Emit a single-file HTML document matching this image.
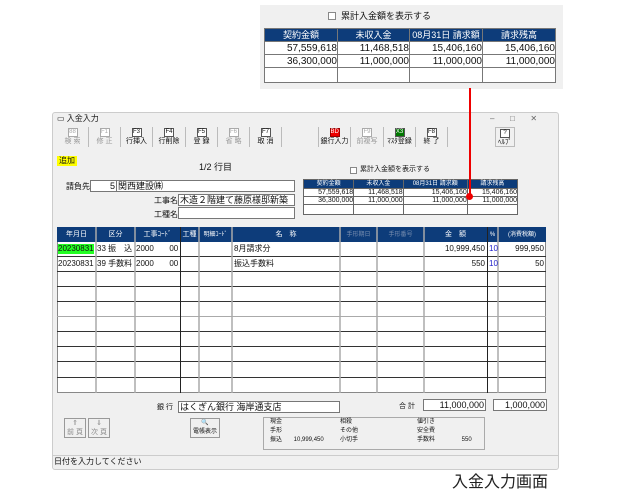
<!DOCTYPE html>
<html><head><meta charset="utf-8"><style>
*{margin:0;padding:0;box-sizing:border-box}
body{width:617px;height:500px;background:#fff;position:relative;overflow:hidden;font-family:"Liberation Sans","Noto Sans CJK JP",sans-serif;color:#111}
.a{position:absolute}
.t{position:absolute;font-size:8px;white-space:nowrap;line-height:10px}
.hd{background:#0d3c7a;color:#fff;font-size:8px;text-align:center;line-height:12px}
.box{position:absolute;background:#fff;border:1px solid #777}
.tb{position:absolute;top:127px;height:20px;border-right:1px solid #bbb;text-align:center;font-size:7px;line-height:8px}
.tb i{display:block;margin:1px auto 1px;width:10px;height:9px;border:1px solid #555;font-style:normal;font-size:6px;line-height:7px;background:#fff}
.g{color:#999}.g i{border-color:#aaa;color:#aaa}
</style></head><body>

<!-- popup -->
<div class="a" style="left:260px;top:5px;width:303px;height:84px;background:#f0f0f0"></div>
<div class="a" style="left:328px;top:12px;width:8px;height:8px;border:1px solid #888;background:#fff"></div>
<div class="t" style="left:341px;top:11px;font-size:9px">累計入金額を表示する</div>
<table class="a" style="left:264px;top:28px;width:292px;border-collapse:collapse;font-size:10px">
<tr class="hd" style="font-size:9px"><td style="width:73px;border:1px solid #777">契約金額</td><td style="width:72px;border:1px solid #777">未収入金</td><td style="width:73px;border:1px solid #777">08月31日 請求額</td><td style="border:1px solid #777">請求残高</td></tr>
<tr style="height:13px;text-align:right;background:#fff"><td style="border:1px solid #777">57,559,618</td><td style="border:1px solid #777">11,468,518</td><td style="border:1px solid #777">15,406,160</td><td style="border:1px solid #777">15,406,160</td></tr>
<tr style="height:13px;text-align:right;background:#fff"><td style="border:1px solid #777">36,300,000</td><td style="border:1px solid #777">11,000,000</td><td style="border:1px solid #777">11,000,000</td><td style="border:1px solid #777">11,000,000</td></tr>
<tr style="height:15px;background:#fff"><td style="border:1px solid #777"></td><td style="border:1px solid #777"></td><td style="border:1px solid #777"></td><td style="border:1px solid #777"></td></tr>
</table>

<!-- window -->
<div class="a" style="left:52px;top:112px;width:507px;height:358px;background:#f0f0f0;border:1px solid #ccc;border-radius:3px"></div>
<div class="t" style="left:57px;top:114px">▭ 入金入力</div>
<div class="t" style="left:490px;top:114px;color:#666">–&nbsp;&nbsp;&nbsp;&nbsp;&nbsp;&nbsp;&nbsp;□&nbsp;&nbsp;&nbsp;&nbsp;&nbsp;&nbsp;&nbsp;✕</div>
<div class="tb g" style="left:57px;width:32px"><i>88</i>検 索</div>
<div class="tb g" style="left:89px;width:32px"><i>F1</i>修 正</div>
<div class="tb" style="left:121px;width:32px"><i>F3</i>行挿入</div>
<div class="tb" style="left:153px;width:33px"><i>F4</i>行削除</div>
<div class="tb" style="left:186px;width:32px"><i>F5</i>登 録</div>
<div class="tb g" style="left:218px;width:32px"><i>F6</i>省 略</div>
<div class="tb" style="left:250px;width:32px"><i>F7</i>取 消</div>
<div class="tb" style="left:282px;width:37px"></div>
<div class="tb" style="left:319px;width:32px"><i style="background:#e00;color:#fff;border-color:#900">BD</i>銀行入力</div>
<div class="tb g" style="left:351px;width:33px"><i>F9</i>前複写</div>
<div class="tb" style="left:384px;width:32px"><i style="background:#070;color:#fff">X3</i>ﾏｽﾀ登録</div>
<div class="tb" style="left:416px;width:32px"><i>F8</i>終 了</div>
<div class="tb" style="left:495px;width:20px;border:1px solid #bbb"><i>?</i>ﾍﾙﾌﾟ</div>

<div class="t" style="left:57px;top:156px;background:#ff0;padding:0 2px">追加</div>
<div class="t" style="left:199px;top:162px;font-size:9px">1/2 行目</div>
<div class="a" style="left:350px;top:167px;width:7px;height:7px;border:1px solid #888;background:#fff"></div>
<div class="t" style="left:360px;top:165px;font-size:7px">累計入金額を表示する</div>
<div class="t" style="left:66px;top:182px">請負先</div>
<div class="box" style="left:90px;top:180px;width:205px;height:12px"></div>
<div class="a" style="left:116px;top:181px;width:1px;height:10px;background:#777"></div>
<div class="t" style="left:90px;top:181px;width:25px;text-align:right;font-size:9px">5</div>
<div class="t" style="left:118px;top:181px;font-size:9px">関西建設㈱</div>
<div class="t" style="left:154px;top:196px">工事名</div>
<div class="box" style="left:178px;top:194px;width:117px;height:12px"></div>
<div class="t" style="left:180px;top:195px;font-size:9px">木造２階建て藤原様邸新築</div>
<div class="t" style="left:154px;top:210px">工種名</div>
<div class="box" style="left:178px;top:207px;width:117px;height:12px"></div>

<table class="a" style="left:303px;top:179px;width:215px;border-collapse:collapse;font-size:7px;background:#fff">
<tr class="hd" style="font-size:6px;line-height:8px"><td style="border:1px solid #666">契約金額</td><td style="border:1px solid #666">未収入金</td><td style="border:1px solid #666">08月31日 請求額</td><td style="border:1px solid #666">請求残高</td></tr>
<tr style="height:8px;text-align:right"><td style="border:1px solid #666">57,559,618</td><td style="border:1px solid #666">11,468,518</td><td style="border:1px solid #666">15,406,160</td><td style="border:1px solid #666">15,406,160</td></tr>
<tr style="height:8px;text-align:right"><td style="border:1px solid #666">36,300,000</td><td style="border:1px solid #666">11,000,000</td><td style="border:1px solid #666">11,000,000</td><td style="border:1px solid #666">11,000,000</td></tr>
<tr style="height:10px"><td style="border:1px solid #666"></td><td style="border:1px solid #666"></td><td style="border:1px solid #666"></td><td style="border:1px solid #666"></td></tr>
</table>

<!-- red pointer -->
<div class="a" style="left:469px;top:88px;width:2px;height:108px;background:#e00"></div>
<div class="a" style="left:466px;top:193px;width:7px;height:7px;border-radius:50%;background:#e00"></div>

<!-- grid -->
<div class="a" style="left:57px;top:227px;width:489px;height:166px;background:#fff;border:1px solid #888"></div>
<div class="a hd" style="left:57px;top:227px;width:489px;height:15px"></div>
<svg class="a" style="left:0;top:0" width="617" height="500">
<g stroke="#333" stroke-width="1">
<line x1="57" y1="256.5" x2="546" y2="256.5"/><line x1="57" y1="271.5" x2="546" y2="271.5"/><line x1="57" y1="286.5" x2="546" y2="286.5"/><line x1="57" y1="301.5" x2="546" y2="301.5"/><line x1="57" y1="316.5" x2="546" y2="316.5" stroke="#aaa"/><line x1="57" y1="331.5" x2="546" y2="331.5"/><line x1="57" y1="346.5" x2="546" y2="346.5"/><line x1="57" y1="361.5" x2="546" y2="361.5"/><line x1="57" y1="377.5" x2="546" y2="377.5"/>
</g>
<g stroke="#aaa" stroke-width="1.5">
<line x1="96" y1="227" x2="96" y2="393"/><line x1="135" y1="227" x2="135" y2="393"/><line x1="199" y1="227" x2="199" y2="393"/><line x1="232" y1="227" x2="232" y2="393"/><line x1="340" y1="227" x2="340" y2="393"/><line x1="377" y1="227" x2="377" y2="393"/><line x1="424" y1="227" x2="424" y2="393"/><line x1="498" y1="227" x2="498" y2="393"/>
</g>
<g stroke="#222" stroke-width="1"><line x1="180.5" y1="227" x2="180.5" y2="393"/><line x1="487.5" y1="227" x2="487.5" y2="393"/></g>
</svg>
<div class="t" style="left:57px;top:230px;width:39px;text-align:center;color:#fff;font-size:7px">年月日</div>
<div class="t" style="left:96px;top:230px;width:39px;text-align:center;color:#fff;font-size:7px">区分</div>
<div class="t" style="left:135px;top:230px;width:45px;text-align:center;color:#fff;font-size:7px">工事ｺｰﾄﾞ</div>
<div class="t" style="left:180px;top:230px;width:19px;text-align:center;color:#fff;font-size:7px">工種</div>
<div class="t" style="left:199px;top:230px;width:33px;text-align:center;color:#fff;font-size:6px">明細ｺｰﾄﾞ</div>
<div class="t" style="left:232px;top:230px;width:108px;text-align:center;color:#fff;font-size:7px">名　称</div>
<div class="t" style="left:340px;top:230px;width:37px;text-align:center;color:#7a8fb0;font-size:6px">手形期日</div>
<div class="t" style="left:377px;top:230px;width:47px;text-align:center;color:#7a8fb0;font-size:6px">手形番号</div>
<div class="t" style="left:424px;top:230px;width:63px;text-align:center;color:#fff;font-size:7px">金　額</div>
<div class="t" style="left:487px;top:230px;width:11px;text-align:center;color:#fff;font-size:6px">%</div>
<div class="t" style="left:498px;top:230px;width:48px;text-align:center;color:#fff;font-size:6px">(消費税額)</div>

<div class="t" style="left:58px;top:244px;background:#2f2;font-size:8px">20230831</div>
<div class="t" style="left:97px;top:244px">33 振　込</div>
<div class="t" style="left:136px;top:244px">2000&nbsp;&nbsp;&nbsp;&nbsp;&nbsp;&nbsp;&nbsp;00</div>
<div class="t" style="left:234px;top:244px">8月請求分</div>
<div class="t" style="left:424px;top:244px;width:61px;text-align:right">10,999,450</div>
<div class="t" style="left:489px;top:244px;color:#22c">10</div>
<div class="t" style="left:498px;top:244px;width:46px;text-align:right">999,950</div>
<div class="t" style="left:58px;top:259px">20230831</div>
<div class="t" style="left:97px;top:259px">39 手数料</div>
<div class="t" style="left:136px;top:259px">2000&nbsp;&nbsp;&nbsp;&nbsp;&nbsp;&nbsp;&nbsp;00</div>
<div class="t" style="left:234px;top:259px">振込手数料</div>
<div class="t" style="left:424px;top:259px;width:61px;text-align:right">550</div>
<div class="t" style="left:489px;top:259px;color:#22c">10</div>
<div class="t" style="left:498px;top:259px;width:46px;text-align:right">50</div>

<!-- bottom -->
<div class="t" style="left:157px;top:403px;font-size:7px">銀 行</div>
<div class="box" style="left:178px;top:401px;width:162px;height:12px"></div>
<div class="t" style="left:180px;top:402px;font-size:9px">はくぎん銀行 海岸通支店</div>
<div class="t" style="left:399px;top:402px;font-size:7px">合 計</div>
<div class="box" style="left:423px;top:399px;width:63px;height:12px"></div>
<div class="t" style="left:423px;top:400px;width:61px;text-align:right;font-size:9px">11,000,000</div>
<div class="box" style="left:493px;top:399px;width:54px;height:12px"></div>
<div class="t" style="left:493px;top:400px;width:52px;text-align:right;font-size:9px">1,000,000</div>
<div class="a" style="left:64px;top:418px;width:22px;height:20px;border:1px solid #999;font-size:7px;color:#888;text-align:center;line-height:9px">⇑<br>前 頁</div>
<div class="a" style="left:88px;top:418px;width:22px;height:20px;border:1px solid #999;font-size:7px;color:#888;text-align:center;line-height:9px">⇓<br>次 頁</div>
<div class="a" style="left:190px;top:418px;width:30px;height:20px;border:1px solid #999;font-size:6px;text-align:center;line-height:9px">🔍<br>電帳表示</div>
<div class="a" style="left:263px;top:417px;width:222px;height:33px;border:1px solid #aaa"></div>
<div class="t" style="left:270px;top:418px;font-size:6px;line-height:9px">現金<br>手形<br>振込&nbsp;&nbsp;&nbsp;&nbsp;&nbsp;&nbsp;&nbsp;10,999,450</div>
<div class="t" style="left:340px;top:418px;font-size:6px;line-height:9px">相殺<br>その他<br>小切手</div>
<div class="t" style="left:417px;top:418px;font-size:6px;line-height:9px">値引き<br>安全費<br>手数料&nbsp;&nbsp;&nbsp;&nbsp;&nbsp;&nbsp;&nbsp;&nbsp;&nbsp;&nbsp;&nbsp;&nbsp;&nbsp;&nbsp;&nbsp;&nbsp;550</div>
<div class="a" style="left:53px;top:455px;width:505px;height:1px;background:#ccc"></div>
<div class="t" style="left:54px;top:457px;font-size:8px">日付を入力してください</div>

<div class="t" style="left:452px;top:473px;font-size:16px;line-height:20px;color:#222">入金入力画面</div>
</body></html>
